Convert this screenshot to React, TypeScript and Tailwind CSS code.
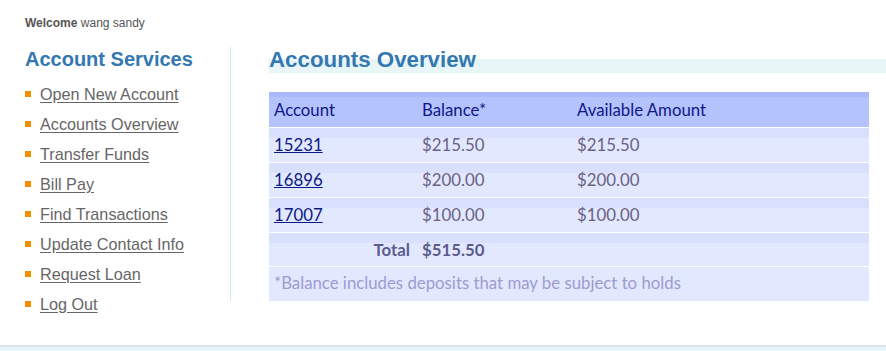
import React from "react";

const menu = [
  "Open New Account",
  "Accounts Overview",
  "Transfer Funds",
  "Bill Pay",
  "Find Transactions",
  "Update Contact Info",
  "Request Loan",
  "Log Out",
];

const accounts = [
  { id: "15231", balance: "$215.50", available: "$215.50" },
  { id: "16896", balance: "$200.00", available: "$200.00" },
  { id: "17007", balance: "$100.00", available: "$100.00" },
];

const rowBg = "bg-[linear-gradient(#d8e0fd_0_10px,#e2e8fd_10px)]";

export default function App() {
  return (
    <div className="w-[886px] h-[351px] bg-white flex flex-col font-['Liberation_Sans',Arial,sans-serif] overflow-hidden">
      <div className="pl-[25px] pt-[15px] text-[12px] leading-[16px] text-[#555]">
        <b>Welcome</b> wang sandy
      </div>

      <div className="flex flex-1 pt-[16px]">
        {/* sidebar */}
        <div className="ml-[25px] w-[206px] h-[254px] border-r border-[#cbeaea]">
          <h2 className="text-[20px] leading-[24px] font-bold text-[#3378b0]">Account Services</h2>
          <ul className="mt-[8px]">
            {menu.map((m) => (
              <li key={m} className="h-[30px] flex items-center">
                <span className="w-[6px] h-[6px] bg-[#f09000] mr-[9px]" />
                <a href="#" className="text-[16.2px] text-[#666] underline underline-offset-2">
                  {m}
                </a>
              </li>
            ))}
          </ul>
        </div>

        {/* main */}
        <div className="flex-1 pl-[38px] pr-[17px]">
          <h1 className="-mr-[17px] text-[22.3px] leading-[26px] font-bold text-[#3378b0] bg-[linear-gradient(transparent_12px,#e8f6f8_12px)]">
            Accounts Overview
          </h1>

          <div className="mt-[19px] font-['Lato',sans-serif] text-[16.8px]">
            <div className="h-[36px] flex items-center bg-[linear-gradient(#a8b8f9_0_5px,#b4c3fb_5px)] pt-[1px] text-[#10168a] border-b border-white">
              <div className="w-[153px] pl-[5px]">Account</div>
              <div className="w-[155px]">Balance*</div>
              <div>Available Amount</div>
            </div>
            {accounts.map((a) => (
              <div key={a.id} className={`h-[35px] flex items-center ${rowBg} border-b border-white pb-[1px] text-[#6b6287]`}>
                <div className="w-[153px] pl-[5px]">
                  <a href="#" className="text-[#0b1a86] underline">
                    {a.id}
                  </a>
                </div>
                <div className="w-[155px]">{a.balance}</div>
                <div>{a.available}</div>
              </div>
            ))}
            <div className={`h-[34px] flex items-center ${rowBg} border-b border-white font-bold text-[#5b5b8e]`}>
              <div className="w-[153px] pr-[12px] text-right">Total</div>
              <div>$515.50</div>
            </div>
            <div className="h-[34px] flex items-center bg-[#e2e8fd] pl-[5px] pb-[3px] text-[#9d9bd2]">
              *Balance includes deposits that may be subject to holds
            </div>
          </div>
        </div>
      </div>

      <div className="h-[6px] border-t-2 border-[#d8e4ee] bg-[#e8f5f8]" />
    </div>
  );
}
